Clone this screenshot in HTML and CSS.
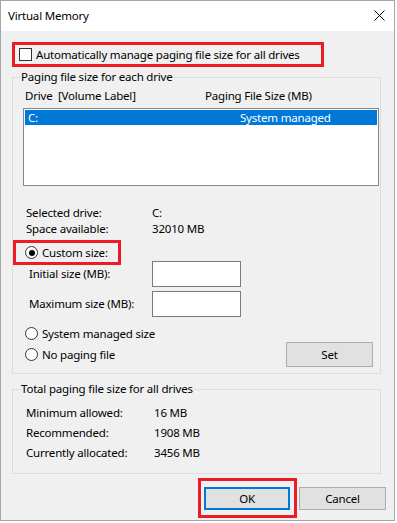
FILE: index.html
```html
<!DOCTYPE html>
<html>
<head>
<meta charset="utf-8">
<link rel="stylesheet" href="styles.css">
</head>
<body>
<div class="window">
  <div class="titlebar">
    <span class="title">Virtual Memory</span>
    <svg class="close" width="11" height="11" viewBox="0 0 11 11"><path d="M0.5 0.5 L10.5 10.5 M10.5 0.5 L0.5 10.5" stroke="#000" stroke-width="1"/></svg>
  </div>
  <div class="content">
    <div class="auto mark">
      <span class="checkbox"></span>
      <span>Automatically manage paging file size for all drives</span>
    </div>

    <fieldset class="group group1">
      <legend>Paging file size for each drive</legend>
      <div class="list-head">
        <span class="col-drive">Drive&nbsp;&nbsp;[Volume Label]</span>
        <span>Paging File Size (MB)</span>
      </div>
      <div class="listbox">
        <div class="list-row selected">
          <span class="col-drive2">C:</span>
          <span>System managed</span>
        </div>
      </div>
      <div class="info-row first"><span class="info-label">Selected drive:</span><span>C:</span></div>
      <div class="info-row"><span class="info-label">Space available:</span><span>32010 MB</span></div>

      <div class="custom mark">
        <span class="radio checked"></span>
        <span>Custom size:</span>
      </div>
      <div class="size-row initial">
        <span class="size-label">Initial size (MB):</span>
        <span class="input"></span>
      </div>
      <div class="size-row maximum">
        <span class="size-label">Maximum size (MB):</span>
        <span class="input"></span>
      </div>
      <div class="radio-row sys">
        <span class="radio"></span><span>System managed size</span>
      </div>
      <div class="bottom-row">
        <div class="radio-row"><span class="radio"></span><span>No paging file</span></div>
        <button class="btn set">Set</button>
      </div>
    </fieldset>

    <fieldset class="group group2">
      <legend>Total paging file size for all drives</legend>
      <div class="total-row first"><span class="total-label">Minimum allowed:</span><span>16 MB</span></div>
      <div class="total-row"><span class="total-label">Recommended:</span><span>1908 MB</span></div>
      <div class="total-row"><span class="total-label">Currently allocated:</span><span>3456 MB</span></div>
    </fieldset>

    <div class="buttons">
      <div class="ok-mark">
        <button class="btn ok">OK</button>
      </div>
      <button class="btn cancel">Cancel</button>
    </div>
  </div>
</div>
</body>
</html>
```

FILE: styles.css
```css
* { box-sizing: border-box; }
html, body {
  margin: 0;
  padding: 0;
  background: #ffffff;
}
body {
  font-family: "Segoe UI", "Noto Sans", sans-serif;
  font-size: 11.5px;
  letter-spacing: -0.2px;
  color: #000;
  white-space: nowrap;
}
.window {
  width: 395px;
  height: 521px;
  border: 1px solid #a0a8a8;
  background: #f0f0f0;
  display: flex;
  flex-direction: column;
}
.titlebar {
  height: 30px;
  background: #ffffff;
  display: flex;
  align-items: center;
  justify-content: space-between;
  padding: 0 9px 0 7px;
  flex: none;
}
.title {
  line-height: 16px;
}
.close { display: block; margin-top: -1px; }

.content {
  padding: 0 8px 0 11px;
  line-height: 16px;
}

.mark { border: 3px solid #ed1c24; }

.auto {
  margin-top: 11px;
  width: 312px;
  height: 25px;
  display: flex;
  align-items: center;
  padding-left: 4px;
  gap: 4px;
}
.checkbox {
  width: 13px;
  height: 13px;
  border: 1px solid #333;
  background: #fff;
  flex: none;
}

.group {
  margin: 0 5px 0 0;
  padding: 0;
  border: 1px solid #dcdcdc;
  min-width: 0;
}
.group legend {
  padding: 0 1px;
  margin-left: 7px;
  line-height: 16px;
}
.group1 {
  margin-top: 2px;
  padding-bottom: 6px;
}
.list-head {
  margin-top: 3px;
  display: flex;
  padding-left: 12px;
}
.col-drive { width: 180px; }
.listbox {
  margin: 4px 1px 0 10px;
  height: 78px;
  border: 1px solid #828790;
  background: #fff;
  padding: 1px;
}
.list-row {
  height: 15px;
  line-height: 15px;
  display: flex;
  padding-left: 3px;
}
.list-row.selected {
  background: #0078d7;
  color: #fff;
}
.col-drive2 { width: 212px; }

.info-row {
  display: flex;
  padding-left: 13px;
  height: 16px;
}
.info-row.first { margin-top: 19px; }
.info-label { width: 126px; }

.custom {
  margin-top: 3px;
  width: 108px;
  height: 25px;
  display: flex;
  align-items: center;
  padding-left: 9px;
  gap: 4px;
}
.radio {
  width: 13px;
  height: 13px;
  border: 1px solid #333;
  border-radius: 50%;
  background: #fff;
  flex: none;
  position: relative;
}
.radio.checked::after {
  content: "";
  position: absolute;
  left: 2.5px;
  top: 2.5px;
  width: 6px;
  height: 6px;
  border-radius: 50%;
  background: #000;
}

.size-row {
  display: flex;
  align-items: center;
  padding-left: 16px;
}
.size-row.initial { margin-top: -4px; }
.size-row.maximum { margin-top: 4px; }
.size-label { width: 123px; }
.input {
  width: 89px;
  height: 26px;
  border: 1px solid #7a7a7a;
  background: #fff;
}

.radio-row {
  display: flex;
  align-items: center;
  gap: 4px;
  padding-left: 12px;
}
.radio-row.sys {
  margin-top: 8px;
  height: 17px;
}
.bottom-row {
  display: flex;
  align-items: center;
  justify-content: space-between;
  height: 25px;
}
.bottom-row .radio-row { padding-left: 12px; }

.btn {
  font-family: inherit;
  font-size: 11.5px;
  letter-spacing: -0.2px;
  color: #000;
  background: #e1e1e1;
  border: 1px solid #adadad;
  padding: 0;
  margin: 0;
  line-height: 16px;
}
.set {
  width: 87px;
  height: 25px;
  margin-right: 7px;
}

.group2 {
  margin-top: 7px;
  padding-bottom: 10px;
}
.total-row {
  display: flex;
  align-items: center;
  height: 20px;
  padding-left: 13px;
}
.total-row.first { margin-top: 6px; }
.total-label { width: 128px; }

.buttons {
  margin-top: 4px;
  display: flex;
  justify-content: flex-end;
  align-items: flex-start;
}
.ok-mark {
  border: 3px solid #ed1c24;
  padding: 6px 4px 5px 3px;
}
.ok {
  width: 86px;
  height: 23px;
  border: 2px solid #0078d7;
  display: block;
}
.cancel {
  margin-top: 9px;
  margin-left: 2px;
  width: 87px;
  height: 23px;
}
```
